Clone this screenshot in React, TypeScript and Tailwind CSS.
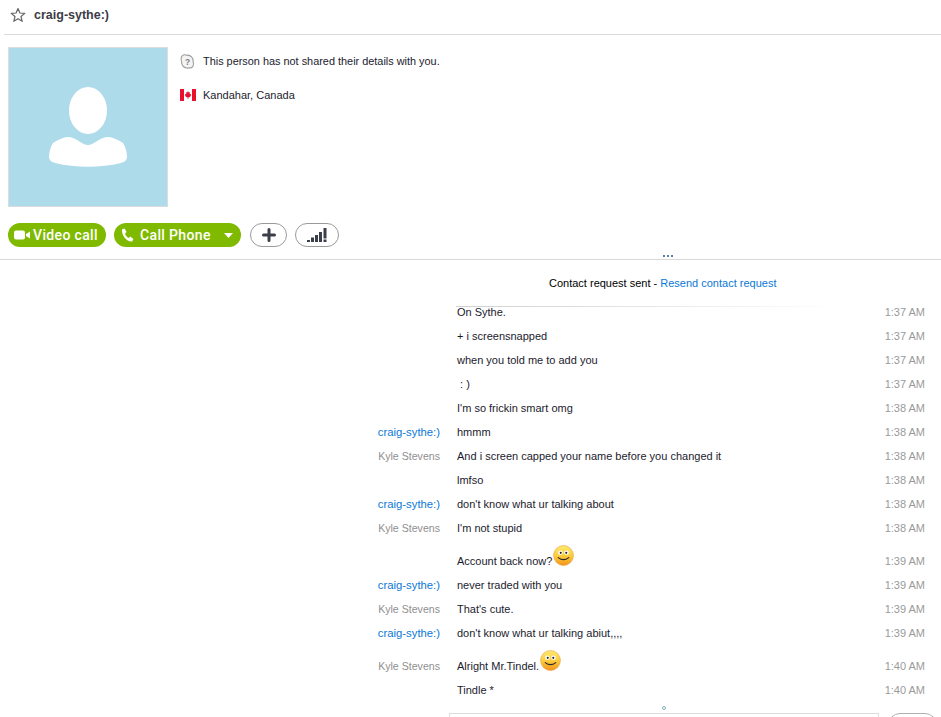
const FONT = "font-['Liberation_Sans',sans-serif]";

type Row = { name?: string; who?: 'c' | 'k'; text: string; time: string; smile?: boolean };

const rows: Row[] = [
  { text: 'On Sythe.', time: '1:37 AM' },
  { text: '+ i screensnapped', time: '1:37 AM' },
  { text: 'when you told me to add you', time: '1:37 AM' },
  { text: '\u00A0: )', time: '1:37 AM' },
  { text: "I'm so frickin smart omg", time: '1:38 AM' },
  { name: 'craig-sythe:)', who: 'c', text: 'hmmm', time: '1:38 AM' },
  { name: 'Kyle Stevens', who: 'k', text: 'And i screen capped your name before you changed it', time: '1:38 AM' },
  { text: 'lmfso', time: '1:38 AM' },
  { name: 'craig-sythe:)', who: 'c', text: "don't know what ur talking about", time: '1:38 AM' },
  { name: 'Kyle Stevens', who: 'k', text: "I'm not stupid", time: '1:38 AM' },
  { text: 'Account back now?', time: '1:39 AM', smile: true },
  { name: 'craig-sythe:)', who: 'c', text: 'never traded with you', time: '1:39 AM' },
  { name: 'Kyle Stevens', who: 'k', text: "That's cute.", time: '1:39 AM' },
  { name: 'craig-sythe:)', who: 'c', text: "don't know what ur talking abiut,,,,", time: '1:39 AM' },
  { name: 'Kyle Stevens', who: 'k', text: 'Alright Mr.Tindel.', time: '1:40 AM', smile: true },
  { text: 'Tindle *', time: '1:40 AM' },
];

function Smile() {
  return (
    <svg width="21" height="21" viewBox="0 0 22 22" className="ml-[1px] mb-[7px] shrink-0">
      <defs>
        <linearGradient id="smileFace" x1="0" y1="0" x2="0" y2="1">
          <stop offset="0" stopColor="#fdeb70" />
          <stop offset="0.55" stopColor="#fbc93a" />
          <stop offset="1" stopColor="#f3921c" />
        </linearGradient>
      </defs>
      <circle cx="11" cy="11" r="10.4" fill="url(#smileFace)" stroke="#eaa646" strokeWidth="0.7" />
      <ellipse cx="7.8" cy="8" rx="2.4" ry="2.3" fill="#fff" />
      <ellipse cx="14.2" cy="8" rx="2.4" ry="2.3" fill="#fff" />
      <circle cx="8.1" cy="8.2" r="1.1" fill="#222" />
      <circle cx="13.9" cy="8.2" r="1.1" fill="#222" />
      <path d="M5.5 13.2 Q11 17.6 16.5 13.2" fill="none" stroke="#2a2a2a" strokeWidth="1.2" strokeLinecap="round" />
    </svg>
  );
}

function Flag() {
  return (
    <svg width="16" height="12" viewBox="0 0 16 12" className="shrink-0">
      <rect width="16" height="12" fill="#fff" />
      <rect width="4" height="12" fill="#e8112d" />
      <rect x="12" width="4" height="12" fill="#e8112d" />
      <path d="M8 2 L8.8 3.6 L10 3.2 L9.6 5.2 L11 4.8 L10.6 6.4 L11.2 6.8 L9 8.4 L8.3 8.2 L8.3 10 L7.7 10 L7.7 8.2 L7 8.4 L4.8 6.8 L5.4 6.4 L5 4.8 L6.4 5.2 L6 3.2 L7.2 3.6 Z" fill="#e8112d" />
    </svg>
  );
}

function SkypeQ() {
  return (
    <svg width="15" height="15" viewBox="0 0 15 15" className="shrink-0">
      <path d="M4 0.8 C5 0.6 5.8 1 6.8 1.2 C10.6 0.8 13.6 3.8 13.2 8 C14.2 10.8 12.8 14.4 9.6 13.8 C8.8 14.2 7.6 14.2 6.6 14 C3.4 13.8 1.4 10.8 1.6 7.6 C0.4 4.4 1.4 1.4 4 0.8 Z" fill="#f4f4f4" stroke="#9c9c9c" strokeWidth="1.1" />
      <text x="7.5" y="10.6" textAnchor="middle" fontSize="8.5" fontWeight="700" fill="#808080" fontFamily="Liberation Sans, sans-serif">?</text>
    </svg>
  );
}

function Avatar() {
  return (
    <div className="w-[160px] h-[160px] shrink-0 bg-[#aedbea] border border-[#dcdcdc]">
      <svg width="158" height="158" viewBox="1 1 158 158" className="block">
        <ellipse cx="80" cy="63.5" rx="19" ry="23.5" fill="#fff" />
        <path d="M41 110 C41 104 43 99 45 96 C50 93 55 90 60 90 C68 90 74 98 80 98 C86 98 92 90 100 90 C105 90 110 93 115 96 C117 99 119 104 119 110 C119 113 117 115 113 116 C92 121 68 121 47 116 C43 115 41 113 41 110 Z" fill="#fff" />
      </svg>
    </div>
  );
}

export default function App() {
  return (
    <div className={`${FONT} w-[941px] h-[717px] overflow-hidden bg-white text-[11px] leading-[16px] text-[#1b1b2e] flex flex-col`}>
      <div className="h-[35px] ml-[4px] pl-[6px] border-b border-[#d9d9d9] flex items-center gap-[8px] shrink-0">
        <svg width="16" height="16" viewBox="0 0 16 16" className="mb-[4px]">
          <path d="M8 1.5 L9.9 6 L14.8 6.4 L11 9.5 L12.2 14.3 L8 11.7 L3.8 14.3 L5 9.5 L1.2 6.4 L6.1 6 Z" fill="none" stroke="#666" strokeWidth="1.2" strokeLinejoin="round" />
        </svg>
        <span className="font-bold text-[12.5px] text-[#3c3c46] mb-[5px]">craig-sythe:)</span>
      </div>

      <div className="flex pl-[8px] pt-[12px] gap-[12px] shrink-0">
        <Avatar />
        <div className="flex flex-col pt-[6px] gap-[18px]">
          <div className="flex items-center gap-[8px] h-[16px]"><SkypeQ /><span className="text-[10.9px]">This person has not shared their details with you.</span></div>
          <div className="flex items-center gap-[7px] h-[16px]"><Flag /><span>Kandahar, Canada</span></div>
        </div>
      </div>

      <div className="flex items-center pl-[8px] mt-[16px] h-[24px] shrink-0 font-['Roboto',sans-serif]">
        <div className="h-[24px] w-[98px] rounded-full bg-[#7fba00] text-white font-medium text-[14px] tracking-[0.35px] flex items-center pl-[6px] gap-[3px]">
          <svg width="16" height="12" viewBox="0 0 16 12"><rect x="0" y="1.5" width="11" height="9" rx="2" fill="#fff" /><path d="M12 5 L16 2.5 V9.5 L12 7 Z" fill="#fff" /></svg>
          <span>Video call</span>
        </div>
        <div className="ml-[8px] h-[24px] w-[127px] rounded-full bg-[#7fba00] text-white font-medium text-[14px] tracking-[0.35px] flex items-center pl-[7px]">
          <svg width="13" height="14" viewBox="0 0 13 14"><path d="M1 1.5 L3.6 0.5 L5.6 4 L4 5.4 C4.6 7.4 6 9 7.6 10 L9.4 8.6 L12.4 11 L11.2 13.4 C6 14 0.6 8 1 1.5 Z" fill="#fff" /></svg>
          <span className="ml-[6px] w-[70px] whitespace-nowrap">Call Phone</span>
          <svg width="9" height="5" viewBox="0 0 9 5" className="ml-[14px]"><path d="M0 0 H9 L4.5 5 Z" fill="#fff" /></svg>
        </div>
        <div className="ml-[9px] h-[24px] w-[37px] rounded-full border border-[#9a9a9a] bg-white flex items-center justify-center">
          <svg width="14" height="14" viewBox="0 0 14 14"><path d="M7 1.5 V12.5 M1.5 7 H12.5" stroke="#3a3f4a" strokeWidth="3" strokeLinecap="round" /></svg>
        </div>
        <div className="ml-[8px] h-[24px] w-[44px] rounded-full border border-[#9a9a9a] bg-white flex items-center justify-center">
          <svg width="20" height="16" viewBox="0 0 20 16" fill="#3a3f4a">
            <rect x="0" y="13" width="3" height="2" />
            <rect x="4" y="10.5" width="3" height="4.5" />
            <rect x="8" y="8" width="3" height="7" />
            <rect x="12" y="5" width="3" height="10" />
            <rect x="16.5" y="1" width="3" height="10.5" />
            <rect x="16.5" y="12.5" width="3" height="2.5" />
          </svg>
        </div>
      </div>

      <div className="relative h-[13px] border-b border-[#d9d9d9] shrink-0">
        <div className="absolute left-[663px] top-[8px] flex gap-[2px]">
          <span className="w-[2px] h-[2px] bg-[#5b7fb5]" />
          <span className="w-[2px] h-[2px] bg-[#5b7fb5]" />
          <span className="w-[2px] h-[2px] bg-[#5b7fb5]" />
        </div>
      </div>

      <div className="h-[40px] pl-[549px] pt-[15px] text-black shrink-0 whitespace-nowrap">
        Contact request sent - <span className="text-[#0b78d6]">Resend contact request</span>
      </div>

      <div className="flex flex-col relative shrink-0">
        <div className="absolute left-[456px] top-[6px] w-[384px] h-px bg-gradient-to-r from-[#cfcfcf] to-white" />
        {rows.map((r, i) => (
          <div key={i} className={`flex items-end shrink-0 ${r.smile ? 'h-[33px]' : 'h-[24px]'}`}>
            <div className={`w-[440px] text-right h-[20px] shrink-0 whitespace-nowrap ${r.who === 'c' ? 'text-[#0b78d6] text-[11.3px]' : 'text-[#8f8f8f] text-[10.6px]'}`}>{r.name}</div>
            <div className="w-[17px] shrink-0" />
            <div className="flex-1 flex items-end whitespace-nowrap min-h-[20px]">
              <span className="h-[20px]">{r.text}</span>
              {r.smile && <Smile />}
            </div>
            <div className="w-[60px] h-[20px] text-[#9a9a9a] text-right shrink-0 whitespace-nowrap">{r.time}</div>
            <div className="w-[16px] shrink-0" />
          </div>
        ))}
      </div>

      <div className="relative flex-1">
        <span className="absolute left-[662px] top-[4px] w-[4px] h-[4px] rounded-full border border-[#7fb5b5]" />
        <div className="absolute left-[449px] top-[11px] w-[430px] h-[20px] border border-[#dcdcdc] bg-white" />
        <div className="absolute left-[888px] top-[11px] w-[49px] h-[24px] rounded-full border border-[#b0b0b0] bg-white" />
      </div>
    </div>
  );
}
